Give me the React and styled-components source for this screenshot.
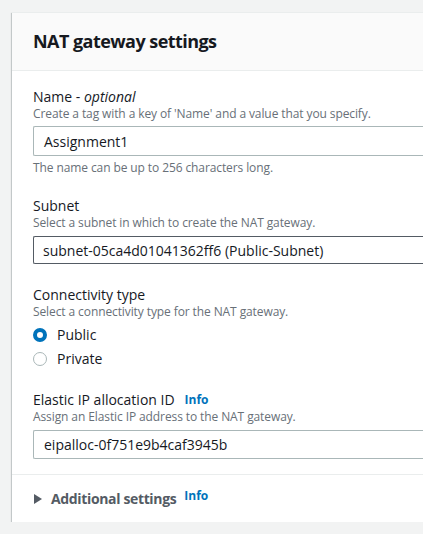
import React from "react";
import styled, { createGlobalStyle } from "styled-components";

const GlobalStyle = createGlobalStyle`
  html, body {
    margin: 0;
    padding: 0;
    background: #f2f3f3;
    font-family: "Open Sans", "Noto Sans", Arial, sans-serif;
    color: #16191f;
    overflow: hidden;
  }
`;

const Page = styled.div`
  padding: 12px 0 0 12px;
`;

const Card = styled.section`
  background: #fff;
  border-top: 1px solid #eaeded;
  box-shadow: 0 1px 1px 0 rgba(0, 28, 36, 0.3), -1px 1px 1px 0 rgba(0, 28, 36, 0.15);
`;

const Header = styled.header`
  background: #fafafa;
  border-bottom: 1px solid #eaeded;
  height: 57px;
  display: flex;
  align-items: center;
  padding: 0 21px;
`;

const Title = styled.h2`
  margin: 0 0 2px;
  font-size: 18px;
  font-weight: 700;
  letter-spacing: -0.55px;
  color: #16191f;
`;

const Body = styled.div`
  padding: 17px 0 15px 21px;
  display: flex;
  flex-direction: column;
`;

const Field = styled.div`
  display: flex;
  flex-direction: column;
  margin-top: ${(p) => p.$mt || 0}px;
`;

const Label = styled.div`
  font-size: 14px;
  line-height: 18px;
  color: #16191f;
  display: flex;
  align-items: center;
  gap: 10px;
  em {
    font-style: italic;
  }
`;

const Desc = styled.div`
  font-size: 12px;
  line-height: 16px;
  color: #687078;
  letter-spacing: -0.1px;
  margin-bottom: ${(p) => p.$mb ?? 4}px;
`;

const Help = styled.div`
  font-size: 12px;
  line-height: 16px;
  color: #687078;
  letter-spacing: -0.1px;
  margin-top: 4px;
`;

const Input = styled.div`
  height: ${(p) => p.$h || 30}px;
  box-sizing: border-box;
  border: 1px solid ${(p) => (p.$select ? "#545b64" : "#aab7b8")};
  border-right: none;
  border-radius: 2px 0 0 2px;
  display: flex;
  align-items: center;
  padding-left: ${(p) => p.$pl || 10}px;
  font-size: 14px;
  color: #16191f;
`;

const Info = styled.span`
  color: #0073bb;
  font-size: 12px;
  font-weight: 700;
  position: relative;
  top: ${(p) => p.$top || 0}px;
`;

const RadioList = styled.div`
  display: flex;
  flex-direction: column;
  gap: 4px;
  margin-top: 5px;
`;

const RadioRow = styled.div`
  display: flex;
  align-items: center;
  gap: 10px;
  font-size: 14px;
  line-height: 20px;
  color: #16191f;
`;

const Radio = styled.span`
  width: 14px;
  height: 14px;
  box-sizing: border-box;
  border-radius: 50%;
  border: ${(p) => (p.$checked ? "4px solid #0073bb" : "1.5px solid #aab7b8")};
  background: #fff;
`;

const Footer = styled.div`
  border-top: 1px solid #eaeded;
  height: 47px;
  display: flex;
  align-items: center;
  padding-left: 22px;
  gap: 8px;
`;

const Expander = styled.div`
  display: flex;
  align-items: center;
  gap: 9px;
  font-size: 14px;
  font-weight: 700;
  letter-spacing: -0.35px;
  color: #545b64;
`;

const Caret = styled.span`
  width: 0;
  height: 0;
  border-top: 5px solid transparent;
  border-bottom: 5px solid transparent;
  border-left: 8px solid #545b64;
`;

export default function App() {
  return (
    <>
      <GlobalStyle />
      <Page>
        <Card>
          <Header>
            <Title>NAT gateway settings</Title>
          </Header>
          <Body>
            <Field>
              <Label>
                <span>
                  Name - <em>optional</em>
                </span>
              </Label>
              <Desc>Create a tag with a key of 'Name' and a value that you specify.</Desc>
              <Input>Assignment1</Input>
              <Help>The name can be up to 256 characters long.</Help>
            </Field>
            <Field $mt={21}>
              <Label>Subnet</Label>
              <Desc $mb={5}>Select a subnet in which to create the NAT gateway.</Desc>
              <Input $select $h={28} $pl={9}>
                subnet-05ca4d01041362ff6 (Public-Subnet)
              </Input>
            </Field>
            <Field $mt={22}>
              <Label>Connectivity type</Label>
              <Desc $mb={0}>Select a connectivity type for the NAT gateway.</Desc>
              <RadioList>
                <RadioRow>
                  <Radio $checked />
                  Public
                </RadioRow>
                <RadioRow>
                  <Radio />
                  Private
                </RadioRow>
              </RadioList>
            </Field>
            <Field $mt={22}>
              <Label>
                Elastic IP allocation ID <Info>Info</Info>
              </Label>
              <Desc $mb={5}>Assign an Elastic IP address to the NAT gateway.</Desc>
              <Input $h={29}>eipalloc-0f751e9b4caf3945b</Input>
            </Field>
          </Body>
          <Footer>
            <Expander>
              <Caret />
              Additional settings
            </Expander>
            <Info $top={-3}>Info</Info>
          </Footer>
        </Card>
      </Page>
    </>
  );
}
